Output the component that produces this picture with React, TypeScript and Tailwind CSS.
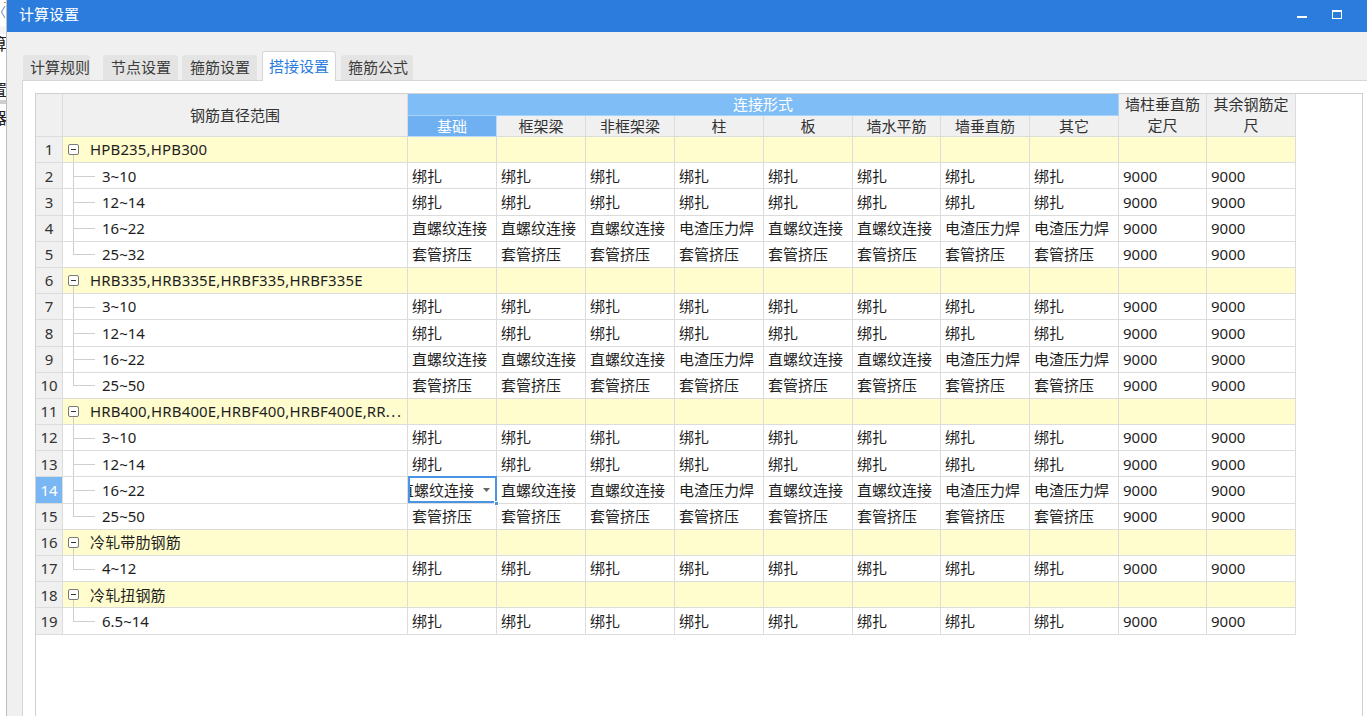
import React from "react";

type Row =
  | { kind: "group"; no: number; label: string; tail?: string }
  | { kind: "child"; no: number; label: string; last: boolean; cells: string[] };

const BZ = "绑扎";
const ZL = "直螺纹连接";
const DZ = "电渣压力焊";
const TG = "套管挤压";

const ALL_BZ = [BZ, BZ, BZ, BZ, BZ, BZ, BZ, BZ];
const MIX = [ZL, ZL, ZL, DZ, ZL, ZL, DZ, DZ];
const ALL_TG = [TG, TG, TG, TG, TG, TG, TG, TG];

const ROWS: Row[] = [
  { kind: "group", no: 1, label: "HPB235,HPB300" },
  { kind: "child", no: 2, label: "3~10", last: false, cells: ALL_BZ },
  { kind: "child", no: 3, label: "12~14", last: false, cells: ALL_BZ },
  { kind: "child", no: 4, label: "16~22", last: false, cells: MIX },
  { kind: "child", no: 5, label: "25~32", last: true, cells: ALL_TG },
  { kind: "group", no: 6, label: "HRB335,HRB335E,HRBF335,HRBF335E" },
  { kind: "child", no: 7, label: "3~10", last: false, cells: ALL_BZ },
  { kind: "child", no: 8, label: "12~14", last: false, cells: ALL_BZ },
  { kind: "child", no: 9, label: "16~22", last: false, cells: MIX },
  { kind: "child", no: 10, label: "25~50", last: true, cells: ALL_TG },
  { kind: "group", no: 11, label: "HRB400,HRB400E,HRBF400,HRBF400E,RR", tail: "..." },
  { kind: "child", no: 12, label: "3~10", last: false, cells: ALL_BZ },
  { kind: "child", no: 13, label: "12~14", last: false, cells: ALL_BZ },
  { kind: "child", no: 14, label: "16~22", last: false, cells: MIX },
  { kind: "child", no: 15, label: "25~50", last: true, cells: ALL_TG },
  { kind: "group", no: 16, label: "冷轧带肋钢筋" },
  { kind: "child", no: 17, label: "4~12", last: true, cells: ALL_BZ },
  { kind: "group", no: 18, label: "冷轧扭钢筋" },
  { kind: "child", no: 19, label: "6.5~14", last: true, cells: ALL_BZ },
];

// widths of the 10 value columns (8 连接形式 + 2 定尺)
const COL_W = ["w-[89px]", "w-[89px]", "w-[89px]", "w-[89px]", "w-[89px]", "w-[88px]", "w-[89px]", "w-[89px]", "w-[88px]", "w-[89px]"];
const HEAD = ["基础", "框架梁", "非框架梁", "柱", "板", "墙水平筋", "墙垂直筋", "其它"];

const LINE = "border-[#dcdcdc]";

function LeftStrip() {
  return (
    <div className="flex w-[7px] shrink-0 flex-col overflow-hidden border-r border-[#bdbdbd] bg-white text-[16px] text-[#222]">
      <svg width="7" height="26" viewBox="0 0 7 26" className="shrink-0">
        <path d="M4 2.5h3" stroke="#f08a24" strokeWidth="1.2" />
        <path d="M5 6 L1.5 12 L5 18" stroke="#8aa4c4" strokeWidth="1.2" fill="none" />
      </svg>
      <div className="h-[8px] shrink-0 bg-[#f4f4f4]" />
      <div className="-ml-[9px] h-[48px] shrink-0 leading-[20px]">算</div>
      <div className="-ml-[9px] h-[18px] shrink-0 leading-[16px]">置</div>
      <div className="h-[4px] shrink-0 bg-[#cfcfcf]" />
      <div className="-ml-[9px] h-[26px] shrink-0 pt-[6px] leading-[16px]">器</div>
      <div className="flex-1 bg-white" />
    </div>
  );
}

function TitleBar() {
  return (
    <div className="flex h-[32px] shrink-0 items-center bg-[#2b7cdc] pb-[3px] pl-[12px] text-white">
      <span className="text-[15px]">计算设置</span>
      <div className="ml-auto flex items-center">
        <div className="mt-[5px] h-[2px] w-[10px] bg-white" />
        <div className="ml-[25px] mr-[25px] h-[9px] w-[10px] border border-t-2 border-white" />
      </div>
    </div>
  );
}

function Tabs() {
  const tab = "flex h-[25px] items-center rounded-t-[3px] bg-[#e4e4e4] text-[#3c3c3c]";
  return (
    <div className="flex h-[48px] shrink-0 items-end pl-[16px]">
      <div className={`${tab} w-[67px] pl-[7px]`}>计算规则</div>
      <div className={`${tab} ml-[13px] w-[75px] pl-[8px]`}>节点设置</div>
      <div className={`${tab} ml-[4px] w-[75px] pl-[8px]`}>箍筋设置</div>
      <div className="relative z-10 -mb-px ml-[5px] flex h-[30px] w-[74px] items-center rounded-t-[3px] border border-b-0 border-[#d6d6d6] bg-white pl-[6px] text-[#2a7ddf]">
        搭接设置
      </div>
      <div className={`${tab} ml-[5px] w-[72px] pl-[7px]`}>箍筋公式</div>
    </div>
  );
}

function Header() {
  return (
    <div className="flex h-[43px] shrink-0 text-[#333]">
      <div className={`w-[27px] shrink-0 border-r border-b ${LINE} bg-[#f0f0f0]`} />
      <div className={`flex w-[345px] shrink-0 items-center justify-center border-r border-b ${LINE} bg-[#f0f0f0]`}>
        钢筋直径范围
      </div>
      <div className="flex w-[711px] shrink-0 flex-col">
        <div className="flex h-[22px] items-center justify-center border-r border-b border-[#a9d2f8] bg-[#7fbdf6] text-white">
          连接形式
        </div>
        <div className="flex h-[21px]">
          {HEAD.map((h, i) => (
            <div
              key={h}
              className={`flex ${COL_W[i]} shrink-0 items-center justify-center border-r border-b ${
                i === 0 ? "border-[#b9daf8] bg-[#6eb0f1] text-white" : `${LINE} bg-[#f0f0f0]`
              }`}
            >
              {h}
            </div>
          ))}
        </div>
      </div>
      <div className={`flex w-[88px] shrink-0 flex-col items-center justify-center border-r border-b ${LINE} bg-[#f0f0f0] leading-[21px]`}>
        <span>墙柱垂直筋</span>
        <span>定尺</span>
      </div>
      <div className={`flex w-[89px] shrink-0 flex-col items-center justify-center border-r border-b ${LINE} bg-[#f0f0f0] leading-[21px]`}>
        <span>其余钢筋定</span>
        <span>尺</span>
      </div>
    </div>
  );
}

function RangeCell({ row }: { row: Row }) {
  if (row.kind === "group") {
    return (
      <div className={`relative flex w-[345px] shrink-0 items-center border-r border-b ${LINE} bg-[#fffcce]`}>
        <div className="absolute left-[10px] top-1/2 bottom-0 w-px bg-[#cfcfcf]" />
        <div className="relative ml-[5px] flex h-[11px] w-[11px] items-center justify-center rounded-[2px] border border-[#7a7a7a] bg-white">
          <div className="h-px w-[5px] bg-[#333]" />
        </div>
        <span className="ml-[11px] whitespace-nowrap tracking-[0.15px]">
          {row.label}
          {row.tail && <span className="tracking-[1.5px]">{row.tail}</span>}
        </span>
      </div>
    );
  }
  return (
    <div className={`relative flex w-[345px] shrink-0 items-center border-r border-b ${LINE} bg-white`}>
      <div className={`absolute left-[10px] top-0 w-px bg-[#cfcfcf] ${row.last ? "h-1/2" : "bottom-0"}`} />
      <div className="absolute left-[10px] top-1/2 h-px w-[22px] bg-[#cfcfcf]" />
      <span className="pl-[39px]">{row.label}</span>
    </div>
  );
}

function BodyRow({ row }: { row: Row }) {
  const selRow = row.no === 14;
  const cells = row.kind === "child" ? [...row.cells, "9000", "9000"] : Array(10).fill("");
  const bg = row.kind === "group" ? "bg-[#fffcce]" : "bg-white";
  return (
    <div className="flex h-[26.2px] shrink-0">
      <div
        className={`flex w-[27px] shrink-0 items-center justify-center border-r border-b ${LINE} ${
          selRow ? "bg-[#79b6f4] text-white" : "bg-[#f0f0f0] text-[#333]"
        }`}
      >
        {row.no}
      </div>
      <RangeCell row={row} />
      {cells.map((c, i) =>
        selRow && i === 0 ? (
          <div key={i} className={`relative ${COL_W[i]} shrink-0 border-r border-b ${LINE} bg-white`}>
            <div className="absolute left-0 top-[-1px] flex h-[27px] w-[89px] items-center overflow-hidden border-2 border-[#4a94e4]">
              <span className="-ml-[11px] whitespace-nowrap">{c}</span>
              <svg width="7" height="4" viewBox="0 0 7 4" className="ml-[9px] shrink-0">
                <path d="M0 0h7L3.5 4z" fill="#666" />
              </svg>
            </div>
            <div className="absolute bottom-[-3px] right-[-3px] h-[5px] w-[5px] border border-white bg-[#4a94e4]" />
          </div>
        ) : (
          <div
            key={i}
            className={`flex ${COL_W[i]} shrink-0 items-center overflow-hidden whitespace-nowrap border-r border-b ${LINE} ${bg} pl-[4px]`}
          >
            {c}
          </div>
        )
      )}
    </div>
  );
}

export default function App() {
  return (
    <div className="flex h-[716px] w-[1367px] overflow-hidden bg-white font-['Noto_Sans','Noto_Sans_CJK_SC',sans-serif] text-[15px] text-[#1e1e1e]">
      <LeftStrip />
      <div className="flex min-w-0 flex-1 flex-col bg-[#f0f0f0]">
        <TitleBar />
        <Tabs />
        <div className="ml-[15px] flex flex-1 flex-col border-t border-l border-[#d6d6d6] bg-white pt-[12px] pl-[12px]">
          <div className="flex h-[700px] w-[1328px] flex-col border border-[#d0d0d0] bg-white">
            <Header />
            {ROWS.map((r) => (
              <BodyRow key={r.no} row={r} />
            ))}
          </div>
        </div>
      </div>
    </div>
  );
}
